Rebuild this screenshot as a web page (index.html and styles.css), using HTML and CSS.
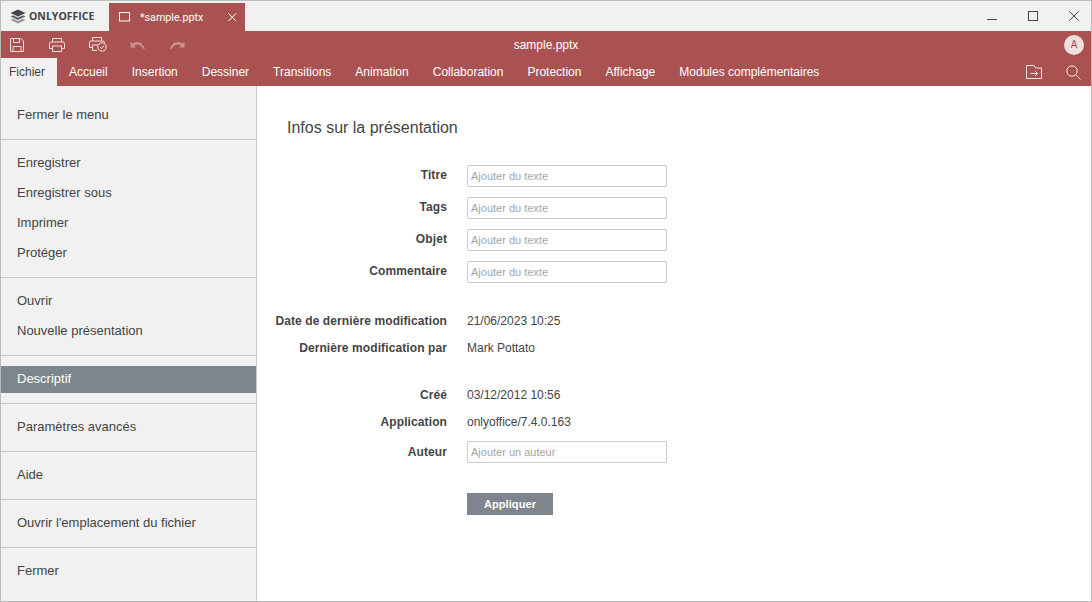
FILE: index.html
```html
<!DOCTYPE html>
<html lang="fr">
<head>
  <meta charset="UTF-8" />
  <meta name="viewport" content="width=device-width, initial-scale=1.0"/>
  <title>sample.pptx</title>
  <link rel="stylesheet" href="styles.css">
</head>
<body>
  <div class="window">
    <header class="titlebar">
      <div class="logo">
        <svg width="16" height="15" viewBox="0 0 16 15">
          <path d="M8 0.5L15.5 4 8 7.5 0.5 4z" fill="#444"/>
          <path d="M3 6.2L0.5 7.4 8 11 15.5 7.4 13 6.2 8 8.6z" fill="#666"/>
          <path d="M3 9.7L0.5 10.9 8 14.5 15.5 10.9 13 9.7 8 12.1z" fill="#999"/>
        </svg>
        <span>ONLYOFFICE</span>
      </div>
      <div class="doc-tab">
        <svg width="12" height="10" viewBox="0 0 12 10"><rect x="0.5" y="0.5" width="10" height="8.5" fill="none" stroke="#fff"/></svg>
        <span class="doc-name">*sample.pptx</span>
        <svg class="doc-close" width="9" height="9" viewBox="0 0 9 9"><path d="M0.5 0.5L8 8M8 0.5L0.5 8" stroke="#fff" fill="none"/></svg>
      </div>
      <div class="win-controls">
        <svg width="10" height="10" viewBox="0 0 10 10"><path d="M0 8.5H10" stroke="#444" fill="none"/></svg>
        <svg width="10" height="10" viewBox="0 0 10 10"><rect x="0.5" y="0.5" width="9" height="9" stroke="#444" fill="none"/></svg>
        <svg width="10" height="10" viewBox="0 0 10 10"><path d="M0.5 0.5L9.5 9.5M9.5 0.5L0.5 9.5" stroke="#444" fill="none"/></svg>
      </div>
    </header>

    <div class="toolbar">
      <div class="tools">
        <svg class="tool-save" width="14" height="14" viewBox="0 0 14 14" fill="none" stroke="#f3dede"><path d="M0.5 0.5H11L13.5 3V13.5H0.5z"/><path d="M3.5 0.5V4.5H9.5V0.5M3 13.5V8.5H11V13.5"/></svg>
        <svg width="16" height="14" viewBox="0 0 16 14" fill="none" stroke="#f3dede"><path d="M3.5 4V0.5H12.5V4"/><path d="M3.5 10.5H0.5V5.5Q0.5 4 2 4H14Q15.5 4 15.5 5.5V10.5H12.5"/><rect x="3.5" y="8" width="9" height="5.5"/></svg>
        <svg class="tool-quick" width="18" height="15" viewBox="0 0 18 15" fill="none" stroke="#f3dede"><path d="M3.5 4V0.5H12.5V4"/><path d="M3.5 10.5H0.5V5.5Q0.5 4 2 4H14Q15.5 4 15.5 5.5V6"/><path d="M3.5 8H9M3.5 8V13.5H8"/><circle cx="13" cy="10" r="4.2"/><path d="M11 10L12.6 11.6 15 8.6"/></svg>
        <svg class="dim" width="16" height="10" viewBox="0 0 16 10" fill="#f3dede"><path d="M0.5 2V7.5H6L4 5.5C7 3.5 10.5 4 13 8.5L15 9C13 3 8 0 3 3.5z"/></svg>
        <svg class="dim" width="16" height="10" viewBox="1 0 16 10" fill="#f3dede"><path d="M15.5 2V7.5H10L12 5.5C9 3.5 5.5 4 3 8.5L1 9C3 3 8 0 13 3.5z"/></svg>
      </div>
      <div class="file-title">sample.pptx</div>
      <div class="avatar">A</div>
    </div>

    <nav class="tabs">
      <a class="tab active">Fichier</a>
      <a class="tab">Accueil</a>
      <a class="tab">Insertion</a>
      <a class="tab">Dessiner</a>
      <a class="tab">Transitions</a>
      <a class="tab">Animation</a>
      <a class="tab">Collaboration</a>
      <a class="tab">Protection</a>
      <a class="tab">Affichage</a>
      <a class="tab">Modules complémentaires</a>
      <div class="tab-icons">
        <svg width="16" height="14" viewBox="0 0 16 14" fill="none" stroke="#f6e6e6"><path d="M0.5 13.5V0.5H8L9.5 3H15.5V13.5z"/><path d="M4.5 8.5H11.5M9 6L11.5 8.5 9 11"/></svg>
        <svg width="15" height="15" viewBox="0 0 15 15" fill="none" stroke="#f6e6e6"><circle cx="6" cy="6" r="5.2"/><path d="M10 10L14.5 14.5"/></svg>
      </div>
    </nav>

    <div class="content">
      <aside class="sidebar">
        <div class="menu-group first">
          <a class="menu-item">Fermer le menu</a>
        </div>
        <div class="menu-group">
          <a class="menu-item">Enregistrer</a>
          <a class="menu-item">Enregistrer sous</a>
          <a class="menu-item">Imprimer</a>
          <a class="menu-item">Protéger</a>
        </div>
        <div class="menu-group">
          <a class="menu-item">Ouvrir</a>
          <a class="menu-item">Nouvelle présentation</a>
        </div>
        <div class="menu-group">
          <a class="menu-item selected">Descriptif</a>
        </div>
        <div class="menu-group">
          <a class="menu-item">Paramètres avancés</a>
        </div>
        <div class="menu-group">
          <a class="menu-item">Aide</a>
        </div>
        <div class="menu-group">
          <a class="menu-item">Ouvrir l'emplacement du fichier</a>
        </div>
        <div class="menu-group">
          <a class="menu-item">Fermer</a>
        </div>
      </aside>

      <main class="info">
        <h2>Infos sur la présentation</h2>

        <div class="field-row"><label>Titre</label><input type="text" placeholder="Ajouter du texte"></div>
        <div class="field-row"><label>Tags</label><input type="text" placeholder="Ajouter du texte"></div>
        <div class="field-row"><label>Objet</label><input type="text" placeholder="Ajouter du texte"></div>
        <div class="field-row"><label>Commentaire</label><input type="text" placeholder="Ajouter du texte"></div>

        <div class="text-group">
          <div class="text-row"><label>Date de dernière modification</label><span>21/06/2023 10:25</span></div>
          <div class="text-row"><label>Dernière modification par</label><span>Mark Pottato</span></div>
        </div>

        <div class="text-group second">
          <div class="text-row"><label>Créé</label><span>03/12/2012 10:56</span></div>
          <div class="text-row"><label>Application</label><span>onlyoffice/7.4.0.163</span></div>
        </div>

        <div class="field-row author"><label>Auteur</label><input type="text" placeholder="Ajouter un auteur"></div>

        <button class="apply">Appliquer</button>
      </main>
    </div>
  </div>
</body>
</html>
```

FILE: styles.css
```css
* {
  box-sizing: border-box;
}
html, body {
  margin: 0;
  height: 100%;
  overflow: hidden;
}
body {
  font-family: "Liberation Sans", Arial, sans-serif;
  font-size: 12px;
  color: #444;
  background-color: #fff;
}
.window {
  width: 1092px;
  height: 602px;
  border: 1px solid #bbb;
  display: flex;
  flex-direction: column;
}

/* title bar */
.titlebar {
  height: 30px;
  background-color: #f1f1f1;
  display: flex;
  align-items: flex-end;
}
.logo {
  width: 108px;
  height: 30px;
  padding-left: 9px;
  display: flex;
  align-items: center;
  gap: 3px;
  font-family: "Open Sans", sans-serif;
  font-size: 10.5px;
  font-weight: 700;
  color: #444;
}
.doc-tab {
  width: 136px;
  height: 28px;
  background-color: #aa5252;
  color: #fff;
  display: flex;
  align-items: center;
  padding-left: 10px;
}
.doc-name {
  margin-left: 9px;
  width: 88px;
  font-family: Roboto, sans-serif;
  font-size: 10.7px;
}
.win-controls {
  margin-left: auto;
  height: 30px;
  width: 112px;
  padding: 0 12px 1px 8px;
  display: flex;
  align-items: center;
  justify-content: space-between;
}

/* toolbar */
.toolbar {
  height: 27px;
  background-color: #aa5252;
  display: grid;
  grid-template-columns: 1fr auto 1fr;
  align-items: center;
}
.tools {
  display: flex;
  align-items: center;
  padding-left: 9px;
  gap: 24px;
}
.tools .tool-save {
  margin-right: 1px;
}
.tools .tool-quick {
  margin-right: -1px;
}
.tools .dim {
  opacity: 0.45;
}
.file-title {
  color: #fff;
}
.avatar {
  justify-self: end;
  width: 20px;
  height: 20px;
  margin-right: 7px;
  border-radius: 50%;
  background-color: #f1dede;
  color: #aa5252;
  font-size: 10px;
  line-height: 20px;
  text-align: center;
}

/* ribbon tabs */
.tabs {
  height: 28px;
  background-color: #aa5252;
  display: flex;
  align-items: stretch;
}
.tab {
  color: #fff;
  padding: 0 12px;
  line-height: 28px;
}
.tab.active {
  background-color: #f1f1f1;
  color: #444;
  padding: 0 12px 0 8px;
}
.tab-icons {
  margin-left: auto;
  display: flex;
  align-items: center;
  gap: 24px;
  padding-right: 10px;
}

/* main area */
.content {
  flex: 1;
  display: flex;
  min-height: 0;
}
.sidebar {
  width: 256px;
  background-color: #f1f1f1;
  border-right: 1px solid #cbcbcb;
}
.menu-group {
  padding: 10px 0;
  border-top: 1px solid #cbcbcb;
  display: flex;
  flex-direction: column;
  gap: 3px;
}
.menu-group.first {
  border-top: none;
  padding-top: 16px;
}
.menu-item {
  height: 27px;
  line-height: 25px;
  padding-left: 16px;
  font-size: 13px;
  color: #444;
}
.menu-item.selected {
  background-color: #7e858c;
  color: #fff;
}

/* info panel */
.info {
  flex: 1;
}
.info h2 {
  margin: 33px 0 28px 30px;
  font-size: 16px;
  font-weight: 400;
  line-height: 18px;
}
.field-row, .text-row {
  display: grid;
  grid-template-columns: 190px 200px;
  column-gap: 20px;
}
.field-row {
  height: 22px;
  margin-bottom: 10px;
}
.field-row label {
  padding-top: 1px;
}
label {
  font-weight: 700;
  text-align: right;
  line-height: 19px;
  letter-spacing: 0.1px;
}
input {
  width: 200px;
  height: 22px;
  border: 1px solid #cbcbcb;
  border-radius: 2px;
  padding: 0 3px 1px;
  font-family: inherit;
  font-size: 11px;
  color: #444;
  outline: none;
}
input::placeholder {
  color: #a5a5a5;
  opacity: 1;
}
.text-group {
  padding-top: 19px;
  display: flex;
  flex-direction: column;
  gap: 10px;
}
.text-group.second {
  padding-top: 30px;
}
.text-row {
  height: 17px;
  line-height: 19px;
}
.field-row.author {
  margin-top: 11px;
  margin-bottom: 30px;
}
.field-row.author label {
  padding-top: 2px;
}
.apply {
  display: block;
  margin-left: 210px;
  width: 86px;
  height: 22px;
  border: none;
  background-color: #7e858c;
  color: #fff;
  font-family: inherit;
  font-size: 11px;
  font-weight: 700;
  letter-spacing: 0.1px;
  padding: 0;
}
```
